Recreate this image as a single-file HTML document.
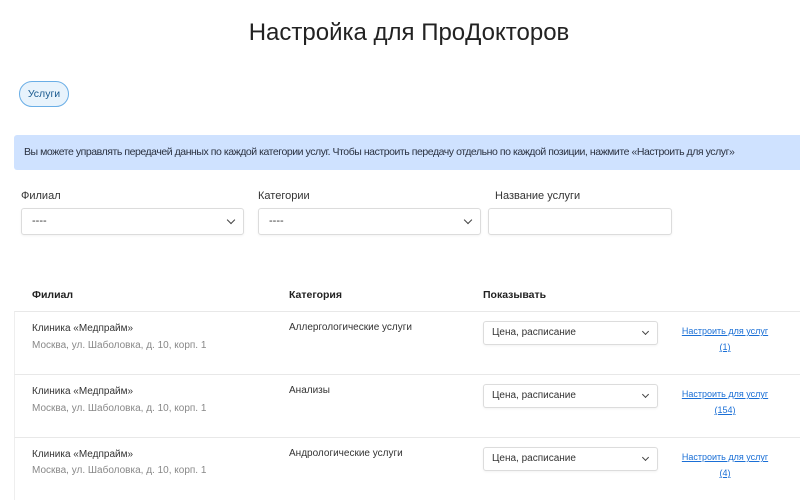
<!DOCTYPE html>
<html><head><meta charset="utf-8"><style>
*{box-sizing:border-box;margin:0;padding:0}
body{width:800px;height:482px;overflow:hidden;background:#fff;font-family:"Liberation Sans",sans-serif;color:#222;position:relative}
.a{position:absolute}
h1{position:absolute;top:19px;left:0;width:818px;text-align:center;font-weight:400;font-size:24px;color:#222}
.pill{left:19px;top:81px;width:50px;height:26px;border:1px solid #6aaee6;background:#e8f3fc;border-radius:13px;font-size:10.5px;color:#1a5a8f;text-align:center;line-height:24px}
.alert{left:14px;top:135px;width:800px;height:35px;background:#cfe2ff;border-radius:3px;font-size:10.5px;color:#2a3140;line-height:35px;padding-left:10px;letter-spacing:-0.45px;white-space:nowrap;overflow:hidden}
.lbl{font-size:11px;color:#333}
.sel{border:1px solid #dcdcdc;border-radius:3px;height:27px;font-size:11px;color:#333;line-height:25px;padding-left:10px;background:#fff;box-shadow:0 1px 2px rgba(0,0,0,.05);white-space:nowrap}
.chev{position:absolute;right:9px;top:8px;width:6px;height:6px;border-right:1.3px solid #444;border-bottom:1.3px solid #444;transform:rotate(45deg)}
.th{font-size:10.5px;font-weight:bold;top:289px}
.row{left:14px;width:800px;height:63px;border-top:1px solid #e8e8e8;border-left:1px solid #eee}
.t{font-size:10px;color:#333;white-space:nowrap}
.g{color:#888}
.lnk{font-size:9px;color:#1a6fd6;text-decoration:underline;text-align:center;width:100px;line-height:16px;white-space:nowrap}
</style></head><body>
<h1>Настройка для ПроДокторов</h1>
<div class="a pill">Услуги</div>
<div class="a alert">Вы можете управлять передачей данных по каждой категории услуг. Чтобы настроить передачу отдельно по каждой позиции, нажмите «Настроить для услуг»</div>
<div class="a lbl" style="left:21px;top:190px">Филиал</div>
<div class="a lbl" style="left:258px;top:190px">Категории</div>
<div class="a lbl" style="left:495px;top:190px">Название услуги</div>
<div class="a sel" style="left:21px;top:208px;width:223px">----<span class="chev"></span></div>
<div class="a sel" style="left:258px;top:208px;width:223px">----<span class="chev"></span></div>
<div class="a sel" style="left:488px;top:208px;width:184px"></div>
<div class="a th" style="left:32px">Филиал</div>
<div class="a th" style="left:289px">Категория</div>
<div class="a th" style="left:483px">Показывать</div>

<div class="a row" style="top:311px"></div>
<div class="a row" style="top:374px"></div>
<div class="a row" style="top:437px"></div>

<div class="a t" style="left:32px;top:323px">Клиника «Медпрайм»</div>
<div class="a t g" style="left:32px;top:340px">Москва, ул. Шаболовка, д. 10, корп. 1</div>
<div class="a t" style="left:289px;top:322px">Аллергологические услуги</div>
<div class="a sel" style="left:483px;top:321px;width:175px;height:24px;line-height:22px;font-size:10px;padding-left:8px">Цена, расписание<span class="chev" style="top:7px;width:5px;height:5px"></span></div>
<div class="a lnk" style="left:675px;top:323px">Настроить для услуг<br>(1)</div>

<div class="a t" style="left:32px;top:386px">Клиника «Медпрайм»</div>
<div class="a t g" style="left:32px;top:403px">Москва, ул. Шаболовка, д. 10, корп. 1</div>
<div class="a t" style="left:289px;top:385px">Анализы</div>
<div class="a sel" style="left:483px;top:384px;width:175px;height:24px;line-height:22px;font-size:10px;padding-left:8px">Цена, расписание<span class="chev" style="top:7px;width:5px;height:5px"></span></div>
<div class="a lnk" style="left:675px;top:386px">Настроить для услуг<br>(154)</div>

<div class="a t" style="left:32px;top:449px">Клиника «Медпрайм»</div>
<div class="a t g" style="left:32px;top:465px">Москва, ул. Шаболовка, д. 10, корп. 1</div>
<div class="a t" style="left:289px;top:448px">Андрологические услуги</div>
<div class="a sel" style="left:483px;top:447px;width:175px;height:24px;line-height:22px;font-size:10px;padding-left:8px">Цена, расписание<span class="chev" style="top:7px;width:5px;height:5px"></span></div>
<div class="a lnk" style="left:675px;top:449px">Настроить для услуг<br>(4)</div>
</body></html>
